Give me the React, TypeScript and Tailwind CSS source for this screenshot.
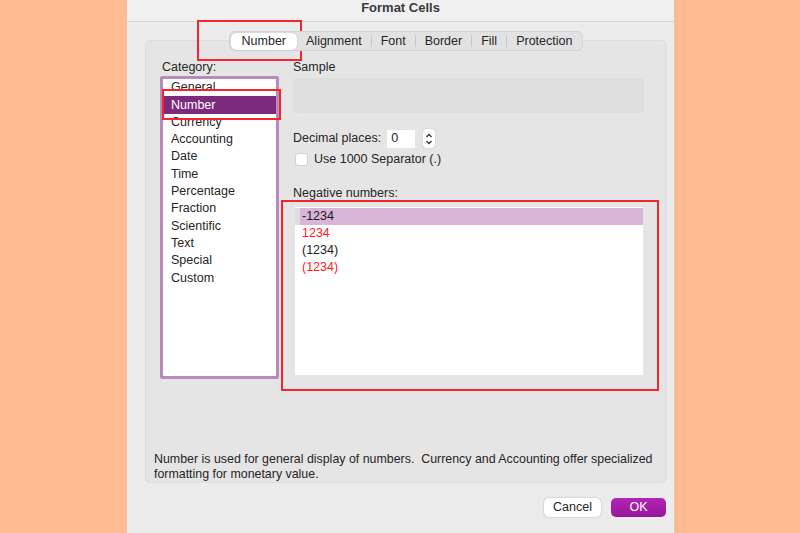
const categories = [
  "General",
  "Number",
  "Currency",
  "Accounting",
  "Date",
  "Time",
  "Percentage",
  "Fraction",
  "Scientific",
  "Text",
  "Special",
  "Custom",
];

const tabs = ["Number", "Alignment", "Font", "Border", "Fill", "Protection"];

const negatives = [
  { label: "-1234", red: false },
  { label: "1234", red: true },
  { label: "(1234)", red: false },
  { label: "(1234)", red: true },
];

export default function App() {
  return (
    <div
      className="relative h-[533px] w-[800px] overflow-hidden bg-[#ffbb92] text-[12.5px] text-[#262626]"
      style={{ fontFamily: "'Liberation Sans', Arial, sans-serif" }}
    >
      <div className="ml-[127px] flex h-[533px] w-[547px] flex-col bg-[#ececec]">
        {/* Title bar */}
        <div className="flex h-[22px] justify-center border-b border-[#d6d6d6] bg-[#f0f0f0] text-[13px] font-bold leading-[16px] text-[#3a3a3a]">
          Format Cells
        </div>

        {/* Tabs */}
        <div className="relative z-10 mt-[9px] flex justify-center pl-[18px] pr-[7px]">
          <div className="flex h-[20px] items-center rounded-[6px] border border-[#d3d3d3] bg-[#e2e2e2] px-[1px]">
            {tabs.map((t, i) => (
              <div key={t} className="flex items-center">
                {i > 1 && <div className="h-[12px] w-px bg-[#c8c8c8]" />}
                <div
                  className={
                    i === 0
                      ? "flex h-[17px] items-center rounded-[5px] bg-white px-[11px] shadow-[0_0_1px_rgba(0,0,0,0.35)]"
                      : "flex h-[17px] items-center px-[9px]"
                  }
                >
                  {t}
                </div>
              </div>
            ))}
          </div>
        </div>

        {/* Panel */}
        <div className="ml-[18px] mr-[7px] -mt-[11px] flex h-[443px] flex-col rounded-[6px] border border-[#dcdcdc] bg-[#e5e5e5]">
          <div className="flex flex-1 gap-[14px] pl-[14px] pr-[22px] pt-[18px]">
            {/* Category */}
            <div className="flex w-[119px] flex-col">
              <div className="ml-[2px] leading-[16px]">Category:</div>
              <div className="mt-[1px] h-[303px] overflow-hidden rounded-[2px] border-[3px] border-[#b88bba] bg-white">
                {categories.map((c) => (
                  <div
                    key={c}
                    className={
                      c === "Number"
                        ? "flex h-[17.3px] items-center bg-[#7b2a7c] pl-[8px] text-white"
                        : "flex h-[17.3px] items-center pl-[8px]"
                    }
                  >
                    {c}
                  </div>
                ))}
              </div>
            </div>

            {/* Right side */}
            <div className="flex flex-1 flex-col">
              <div className="leading-[16px]">Sample</div>
              <div className="mt-[3px] h-[35px] rounded-[4px] bg-[#dedede]" />

              <div className="mt-[16px] flex h-[19px] items-center">
                <span>Decimal places:</span>
                <div className="ml-[6px] flex h-[18px] w-[28px] items-center bg-white pl-[4px]">
                  0
                </div>
                <div className="ml-[8px] flex h-[19px] w-[12px] flex-col items-center justify-center rounded-[3px] bg-white shadow-[0_0_1px_rgba(0,0,0,0.4)]">
                  <svg width="8" height="16" viewBox="0 0 8 16" fill="none" stroke="#333" strokeWidth="1.3">
                    <path d="M1.5 6 L4 3.5 L6.5 6" />
                    <path d="M1.5 10 L4 12.5 L6.5 10" />
                  </svg>
                </div>
              </div>

              <div className="mt-[4px] flex h-[14px] items-center">
                <div className="ml-[2px] h-[13px] w-[13px] rounded-[3px] border border-[#d0d0d0] bg-white" />
                <span className="ml-[6px]">Use 1000 Separator (.)</span>
              </div>

              <div className="mt-[19px] leading-[16px]">Negative numbers:</div>
              <div className="ml-[2px] mt-[6px] h-[168px] w-[348px] bg-white pt-px">
                {negatives.map((n, i) => (
                  <div
                    key={i}
                    className={
                      i === 0
                        ? "flex h-[17px] items-center border-l-[5px] border-[#dedede] bg-[#d9b6d7] pl-[2px]"
                        : "flex h-[17px] items-center pl-[7px]"
                    }
                  >
                    <span className={n.red ? "text-[#ff2020]" : "text-[#1a1a1a]"}>{n.label}</span>
                  </div>
                ))}
              </div>
            </div>
          </div>

          <div className="whitespace-nowrap pl-[8px] text-[12.4px] leading-[15px]">
            Number is used for general display of numbers.&nbsp; Currency and Accounting offer specialized
            <br />
            formatting for monetary value.
          </div>
        </div>

        {/* Buttons */}
        <div className="mr-[8px] mt-[15px] flex justify-end gap-[10px]">
          <div className="flex h-[19px] w-[57px] items-center justify-center rounded-[5px] bg-white shadow-[0_0_2px_rgba(0,0,0,0.3)]">
            Cancel
          </div>
          <div className="flex h-[19px] w-[55px] items-center justify-center rounded-[5px] bg-gradient-to-b from-[#b125b3] to-[#95169a] text-white">
            OK
          </div>
        </div>
      </div>

      {/* Red annotation boxes */}
      <div className="absolute left-[197px] top-[20px] h-[41px] w-[105px] border-2 border-[#f4262b]" />
      <div className="absolute left-[162px] top-[89px] h-[31px] w-[119px] border-2 border-[#f4262b]" />
      <div className="absolute left-[281px] top-[200px] h-[191px] w-[378px] border-2 border-[#f4262b]" />
    </div>
  );
}
